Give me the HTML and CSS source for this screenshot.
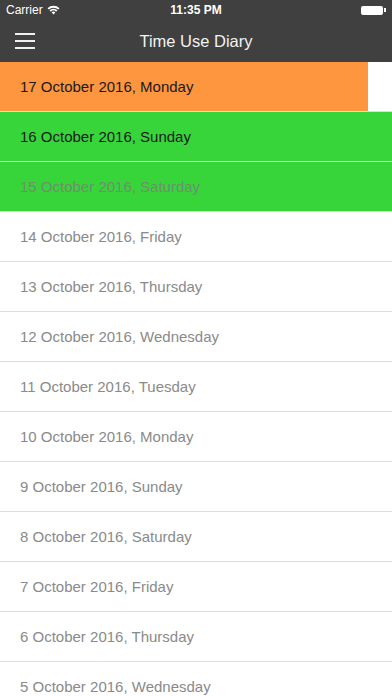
FILE: index.html
```html
<!DOCTYPE html>
<html lang="en">
<head>
  <meta charset="UTF-8" />
  <title>Time Use Diary</title>
  <link rel="stylesheet" href="styles.css">
</head>
<body>
  <div class="header">
    <!-- status bar -->
    <div class="status-bar">
      <div class="carrier">
        Carrier
        <svg class="wifi" width="13" height="10" viewBox="0 0 13 10">
          <path d="M0.5 3.2 A8.5 8.5 0 0 1 12.5 3.2 L11.2 4.6 A6.6 6.6 0 0 0 1.8 4.6 Z" fill="#fff"/>
          <path d="M2.6 5.3 A5.5 5.5 0 0 1 10.4 5.3 L9.1 6.7 A3.6 3.6 0 0 0 3.9 6.7 Z" fill="#fff"/>
          <path d="M4.7 7.5 A2.5 2.5 0 0 1 8.3 7.5 L6.5 9.5 Z" fill="#fff"/>
        </svg>
      </div>
      <div class="clock">11:35 PM</div>
      <div class="battery">
        <span class="battery-body"></span><span class="battery-tip"></span>
      </div>
    </div>
    <!-- nav bar -->
    <div class="nav-bar">
      <div class="menu-btn">
        <span></span><span></span><span></span>
      </div>
      <div class="title">Time Use Diary</div>
    </div>
  </div>

  <div class="day-list">
    <div class="day-row today"><div class="fill">17 October 2016, Monday</div></div>
    <div class="day-row done">16 October 2016, Sunday</div>
    <div class="day-row done faded">15 October 2016, Saturday</div>
    <div class="day-row">14 October 2016, Friday</div>
    <div class="day-row">13 October 2016, Thursday</div>
    <div class="day-row">12 October 2016, Wednesday</div>
    <div class="day-row">11 October 2016, Tuesday</div>
    <div class="day-row">10 October 2016, Monday</div>
    <div class="day-row">9 October 2016, Sunday</div>
    <div class="day-row">8 October 2016, Saturday</div>
    <div class="day-row">7 October 2016, Friday</div>
    <div class="day-row">6 October 2016, Thursday</div>
    <div class="day-row">5 October 2016, Wednesday</div>
  </div>
</body>
</html>
```

FILE: styles.css
```css
* {
  box-sizing: border-box;
}
body {
  margin: 0;
  padding: 0;
  font-family: 'Liberation Sans', Arial, sans-serif;
  background-color: #ffffff;
  height: 696px;
  overflow: hidden;
}
.header {
  background-color: #404040;
  color: #ffffff;
  height: 62px;
}
.status-bar {
  display: flex;
  align-items: center;
  justify-content: space-between;
  height: 20px;
  padding: 0 6px;
  font-size: 12px;
}
.carrier {
  display: flex;
  align-items: center;
  gap: 4px;
  width: 80px;
}
.clock {
  font-weight: bold;
}
.battery {
  width: 80px;
  display: flex;
  justify-content: flex-end;
  align-items: center;
  padding-right: 0;
}
.battery-body {
  width: 22px;
  height: 9px;
  background-color: #ffffff;
  border-radius: 2px;
}
.battery-tip {
  width: 2px;
  height: 4px;
  margin-left: 1px;
  background-color: #ffffff;
}
.nav-bar {
  display: flex;
  align-items: center;
  height: 42px;
  padding: 0 15px;
}
.menu-btn {
  display: flex;
  flex-direction: column;
  gap: 5px;
  width: 20px;
}
.menu-btn span {
  display: block;
  height: 2px;
  background-color: #f0f0f0;
}
.title {
  flex: 1;
  text-align: center;
  font-size: 16.5px;
  color: #f2f2f2;
  margin-right: 20px;
}
.day-list {
  display: flex;
  flex-direction: column;
}
.day-row {
  height: 50px;
  flex-shrink: 0;
  display: flex;
  align-items: center;
  padding-left: 20px;
  font-size: 15px;
  color: #8a8a8a;
  border-bottom: 1px solid #dedede;
}
.day-row.today {
  padding-left: 0;
  align-items: stretch;
}
.day-row.today .fill {
  width: 368px;
  display: flex;
  align-items: center;
  padding-left: 20px;
  background-color: #fe953f;
  color: #1a1a1a;
}
.day-row.done {
  background-color: #37d53a;
  color: #1a1a1a;
  border-bottom-color: #c8eec8;
}
.day-row.done.faded {
  color: #6f8f6f;
}
```
